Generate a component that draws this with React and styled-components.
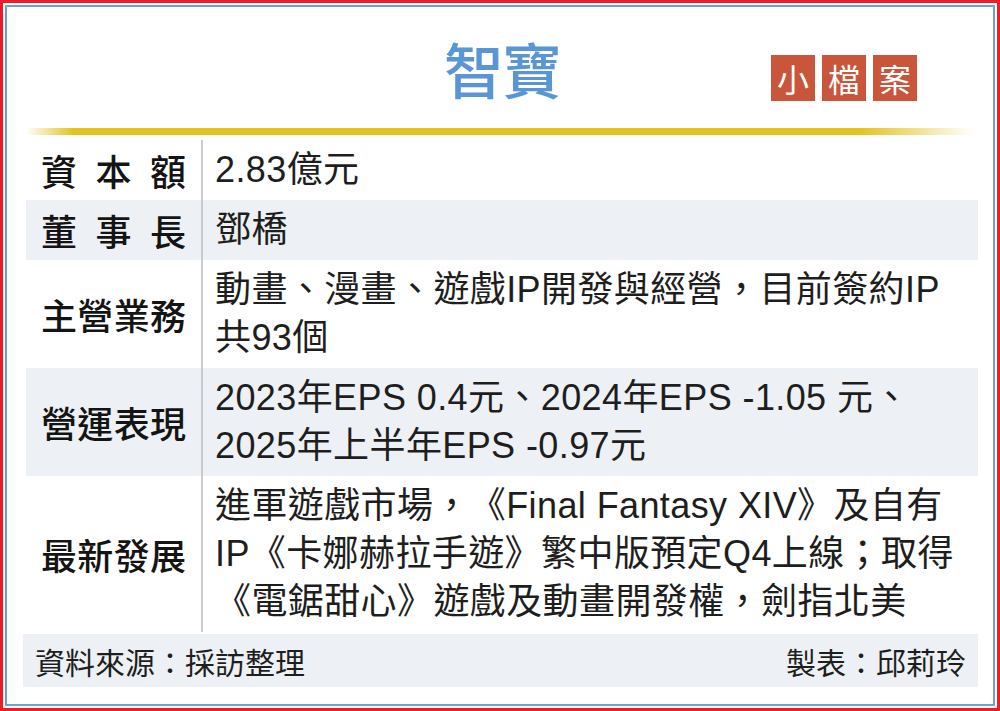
import React from "react";
import styled, { createGlobalStyle } from "styled-components";

const GlobalStyle = createGlobalStyle`
  html, body {
    margin: 0;
    padding: 0;
    background: #ffffff;
  }
  body {
    font-family: "Liberation Sans", "Noto Sans CJK TC", sans-serif;
    text-spacing-trim: space-all;
  }
`;

const Frame = styled.div`
  width: 1000px;
  height: 711px;
  box-sizing: border-box;
  border: 3px solid #ee1c25;
  padding: 2px;
  background: #fff;
`;

const Inner = styled.div`
  height: 100%;
  box-sizing: border-box;
  border: 2px solid #6d9fd6;
  padding: 0 15px 0 19px;
  display: flex;
  flex-direction: column;
`;

const Header = styled.div`
  height: 121px;
  display: grid;
  grid-template-columns: 1fr auto 1fr;
  align-items: center;
`;

const Title = styled.h1`
  grid-column: 2;
  margin: 0;
  font-family: "Noto Sans CJK TC", sans-serif;
  font-weight: 500;
  font-size: 60px;
  line-height: 1;
  color: #5b96d4;
  letter-spacing: -2px;
`;

const Badges = styled.div`
  grid-column: 3;
  justify-self: end;
  margin-right: 61px;
  display: flex;
  gap: 7px;
  transform: translateY(10px);
`;

const Badge = styled.span`
  width: 44px;
  height: 46px;
  background: #c9553b;
  color: #fff;
  font-family: "Noto Sans CJK TC", sans-serif;
  font-size: 32px;
  line-height: 46px;
  text-align: center;
`;

const GoldLine = styled.div`
  height: 7px;
  margin-right: 5px;
  background: linear-gradient(
    to right,
    rgba(228, 194, 32, 0) 0%,
    #e4c220 5%,
    #e4c220 88%,
    rgba(228, 194, 32, 0) 100%
  );
`;

const Table = styled.div`
  margin-top: 5px;
  display: flex;
  flex-direction: column;
`;

const Row = styled.div`
  display: grid;
  grid-template-columns: 175px 1fr;
  background: ${({ shaded }) => (shaded ? "#edf0f4" : "transparent")};
`;

const LabelCell = styled.div`
  display: flex;
  align-items: center;
  justify-content: center;
`;

const Label = styled.div`
  width: 145px;
  display: flex;
  justify-content: space-between;
  font-family: "Noto Sans CJK TC", sans-serif;
  font-weight: 500;
  font-size: 36px;
  color: #141414;
  line-height: 1;
`;

const ValueCell = styled.div`
  border-left: 2px solid #c9cbce;
  padding: 6px 0 6px 12px;
  font-size: 36px;
  line-height: 48px;
  letter-spacing: 0.4px;
  color: #1e1e1e;
  white-space: nowrap;
`;

const Footer = styled.div`
  margin-top: 2px;
  margin-left: -3px;
  height: 53px;
  background: #edf0f4;
  display: flex;
  align-items: center;
  justify-content: space-between;
  padding: 0 12px;
  font-family: "Noto Sans CJK TC", sans-serif;
  font-size: 30px;
  color: #1e1e1e;
`;

const rows = [
  { label: "資本額", value: ["2.83億元"] },
  { label: "董事長", value: ["鄧橋"] },
  {
    label: "主營業務",
    value: ["動畫、漫畫、遊戲IP開發與經營，目前簽約IP", "共93個"],
  },
  {
    label: "營運表現",
    value: ["2023年EPS 0.4元、2024年EPS -1.05 元、", "2025年上半年EPS -0.97元"],
  },
  {
    label: "最新發展",
    value: [
      "進軍遊戲市場，《Final Fantasy XIV》及自有",
      "IP《卡娜赫拉手遊》繁中版預定Q4上線；取得",
      "《電鋸甜心》遊戲及動畫開發權，劍指北美",
    ],
  },
];

export default function App() {
  return (
    <>
      <GlobalStyle />
      <Frame>
        <Inner>
          <Header>
            <Title>智寶</Title>
            <Badges>
              <Badge>小</Badge>
              <Badge>檔</Badge>
              <Badge>案</Badge>
            </Badges>
          </Header>
          <GoldLine />
          <Table>
            {rows.map((row, i) => (
              <Row key={row.label} shaded={i % 2 === 1}>
                <LabelCell>
                  <Label>
                    {row.label.split("").map((ch, j) => (
                      <span key={j}>{ch}</span>
                    ))}
                  </Label>
                </LabelCell>
                <ValueCell>
                  {row.value.map((line, j) => (
                    <div key={j}>{line}</div>
                  ))}
                </ValueCell>
              </Row>
            ))}
          </Table>
          <Footer>
            <span>資料來源：採訪整理</span>
            <span>製表：邱莉玲</span>
          </Footer>
        </Inner>
      </Frame>
    </>
  );
}
